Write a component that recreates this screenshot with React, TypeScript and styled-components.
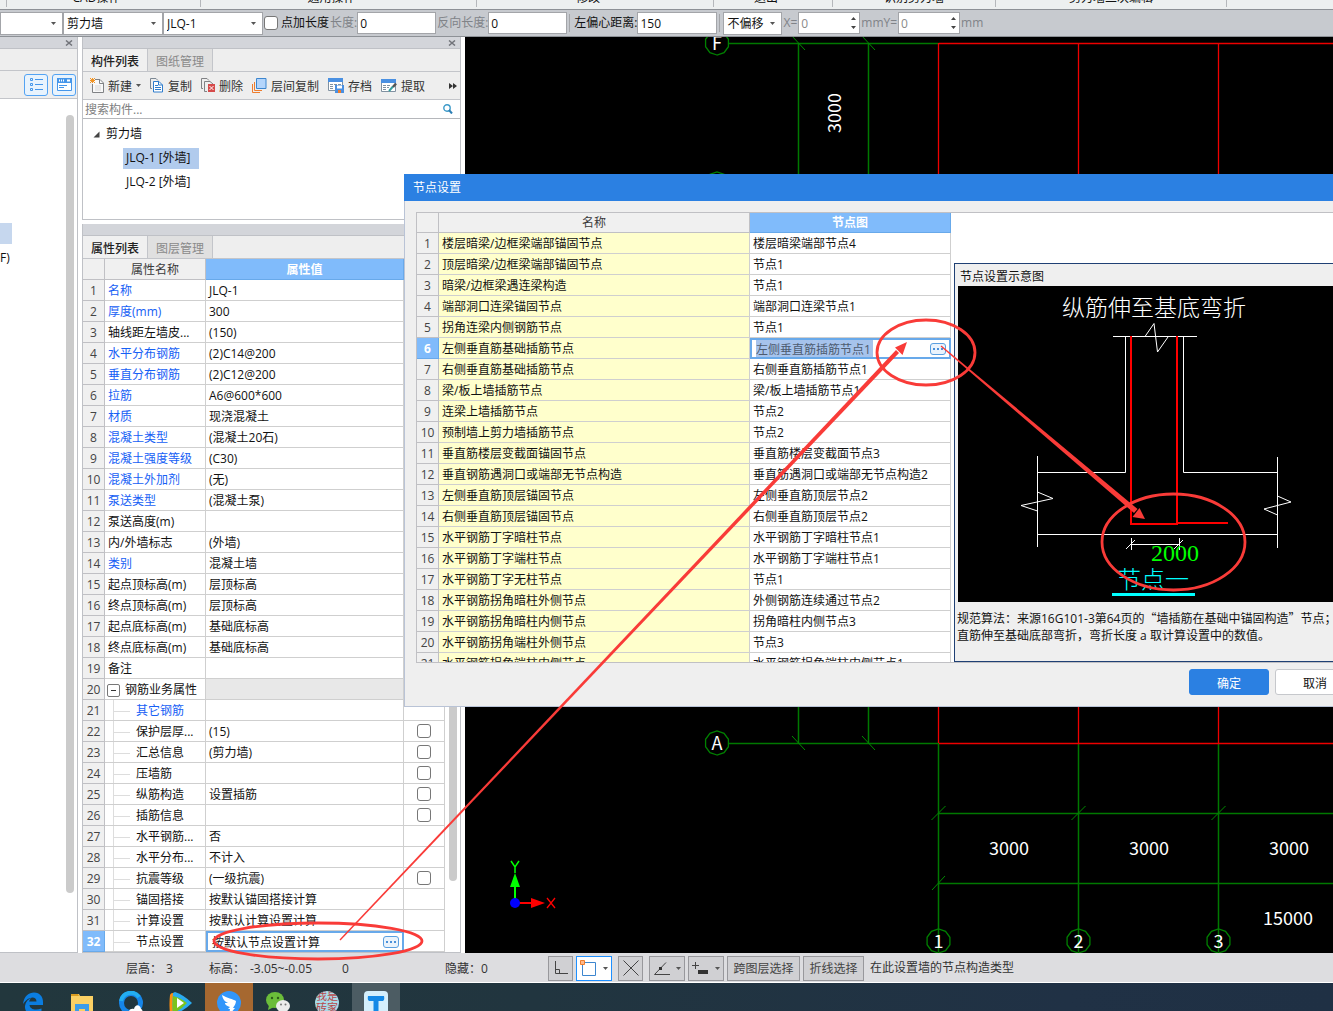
import React from "react";
import styled, { createGlobalStyle, css } from "styled-components";

const SANS = `"Open Sans", "Noto Sans CJK SC", sans-serif`;
const CJK = `"Noto Sans CJK SC", sans-serif`;

const GlobalStyle = createGlobalStyle`
  * { box-sizing: border-box; }
  body { margin: 0; overflow: hidden; }
  body, button, input, select, table { font-family: ${SANS}; font-size: 12px; color: #111; }
  button, input, select { margin: 0; padding: 0; border: 0; border-radius: 0; background: none; outline: 0; }
  ul { margin: 0; padding: 0; list-style: none; }
  svg { display: block; flex: none; }
`;

const App = styled.div`
  position: relative;
  display: flex;
  flex-direction: column;
  height: 100vh;
  overflow: hidden;
  background: #fff;
  line-height: 18px;
  white-space: nowrap;
`;

/* ---------- ribbon and option bar ---------- */

const Ribbon = styled.div`
  display: grid;
  grid-template-columns: 7px 194px 276px 237px 119px 163px 231px 1fr;
  flex: none;
  height: 9px;
  overflow: hidden;
  background: #edf0f0;
`;

const RibbonGroup = styled.div<{ $launcher?: boolean }>`
  display: flex;
  align-items: flex-end;
  justify-content: center;
  height: 7px;
  padding-right: ${(p) => (p.$launcher ? 14 : 0)}px;
  border-right: 1px solid #b5b8bb;
`;

const OptionBar = styled.div`
  display: flex;
  align-items: center;
  flex: none;
  height: 28px;
  border-top: 1px solid #8d9196;
  border-bottom: 1px solid #8d9196;
  background: #c7cacf;
`;

const SelectWrap = styled.span<{ $w: number }>`
  display: grid;
  grid-template-columns: 1fr 11px;
  align-items: center;
  width: ${(p) => p.$w}px;
  height: 23px;
  border: 1px solid #a3a5a9;
  background: #fff;
  select {
    grid-area: 1 / 1 / 2 / 3;
    width: 100%;
    height: 21px;
    padding-left: 3px;
    appearance: none;
  }
  svg { grid-area: 1 / 2; pointer-events: none; }
`;

const Field = styled.input<{ $w: number }>`
  width: ${(p) => p.$w}px;
  height: 22px;
  padding-left: 2px;
  border: 1px solid #a3a5a9;
  background: #fff;
`;

const BarLabel = styled.label<{ $dim?: boolean }>`
  display: flex;
  align-items: center;
  padding-left: 1px;
  color: ${(p) => (p.$dim ? "#808388" : "#111")};
`;

const AxisLabel = styled(BarLabel)`
  padding-right: 1px;
`;

const BarDivider = styled.span`
  width: 1px;
  height: 18px;
  margin: 0 3px 0 2px;
  background: #a3a5a9;
`;

const Spin = styled.span`
  display: flex;
  align-items: center;
  width: 62px;
  height: 22px;
  border: 1px solid #a3a5a9;
  background: #fff;
  input { width: 51px; padding-left: 2px; color: #8a8a8a; }
`;

const Check = styled.input`
  flex: none;
  width: 14px;
  height: 14px;
  border: 1px solid #777;
  border-radius: 3px;
  background: #fff;
  appearance: none;
  vertical-align: middle;
`;

const CheckLabel = styled(BarLabel)`
  gap: 3px;
`;

/* ---------- docked panels ---------- */

const Workspace = styled.div`
  display: flex;
  flex: 1;
  gap: 4px;
  min-height: 0;
`;

const NavDock = styled.aside`
  display: flex;
  flex-direction: column;
  width: 78px;
  border-right: 1px solid #bfc1c6;
  border-bottom: 1px solid #bfc1c6;
`;

const DockTitle = styled.div`
  display: flex;
  align-items: center;
  justify-content: flex-end;
  flex: none;
  height: 12px;
  padding-right: 4px;
  border-bottom: 1px solid #bfc1c6;
  background: #d3d5da;
`;

const NavHead = styled.div`
  flex: none;
  height: 22px;
  border-bottom: 1px solid #c3c5ca;
  background: #eee;
`;

const NavTools = styled.div`
  display: flex;
  align-items: center;
  justify-content: flex-end;
  gap: 4px;
  flex: none;
  height: 28px;
  padding-right: 1px;
  border-bottom: 1px solid #c3c5ca;
  background: #eee;
`;

const ViewButton = styled.button`
  display: flex;
  align-items: center;
  justify-content: center;
  width: 24px;
  height: 22px;
  border: 1px solid #53a3f3;
  border-radius: 3px;
  background: #e8f3fd;
`;

const NavBody = styled.div`
  display: flex;
  justify-content: space-between;
  flex: 1;
  min-height: 0;
  padding: 16px 3px 59px 0;
`;

const NavItems = styled.div`
  padding-top: 108px;
`;

const NavSelected = styled.div`
  width: 12px;
  height: 21px;
  margin-bottom: 5px;
  background: #c6d7ee;
`;

const Thumb = styled.div`
  width: 8px;
  border-radius: 4px;
  background: #cbcbcb;
`;

const Column = styled.div`
  display: flex;
  flex-direction: column;
  gap: 4px;
  width: 379px;
`;

const Dock = styled.section<{ $grow?: boolean }>`
  display: flex;
  flex-direction: column;
  min-height: 0;
  border: 1px solid #bfc1c6;
  border-top: 0;
  ${(p) =>
    p.$grow
      ? css`flex: 1;`
      : css`flex: none; height: 183px;`}
`;

const Tabs = styled.div`
  display: flex;
  flex: none;
  height: 23px;
  border-bottom: 1px solid #c3c5ca;
  background: #eee;
`;

const Tab = styled.button<{ $on?: boolean }>`
  width: 65px;
  padding-top: 1px;
  border-right: 1px solid #c3c5ca;
  background: ${(p) => (p.$on ? "#f0f0f0" : "#e0e0e0")};
  color: ${(p) => (p.$on ? "#222" : "#8a8a8a")};
  font-weight: ${(p) => (p.$on ? 500 : 400)};
`;

const Tools = styled.div`
  display: flex;
  align-items: center;
  gap: 9px;
  flex: none;
  height: 28px;
  padding: 0 3px 0 7px;
  border-bottom: 1px solid #c3c5ca;
  background: #eee;
`;

const Tool = styled.button`
  display: flex;
  align-items: center;
  gap: 4px;
  color: #333;
`;

const More = styled(Tool)`
  margin-left: auto;
`;

const Search = styled.div`
  display: flex;
  align-items: center;
  flex: none;
  height: 19px;
  padding: 0 7px 0 2px;
  border-bottom: 1px solid #b5b7bb;
  input { flex: 1; }
  input::placeholder { color: #808080; opacity: 1; }
`;

const Tree = styled.ul`
  flex: 1;
  padding-top: 3px;
`;

const TreeItem = styled.li<{ $level: number }>`
  display: flex;
  align-items: center;
  gap: 6px;
  height: 24px;
  padding-left: ${(p) => (p.$level ? 40 : 10)}px;
`;

const TreeLabel = styled.span<{ $on?: boolean }>`
  padding: 1px 8px 2px 3px;
  background: ${(p) => (p.$on ? "#b1cbed" : "transparent")};
`;

const TreeRoot = styled.span``;

/* ---------- tables ---------- */

const Grid = styled.table`
  flex: none;
  align-self: flex-start;
  border-spacing: 0;
  table-layout: fixed;
  th, td {
    height: 21px;
    padding: 2px 0 0 3px;
    border-right: 1px solid #cfcfcf;
    border-bottom: 1px solid #cfcfcf;
    overflow: hidden;
    font-weight: 400;
    line-height: 18px;
    text-align: left;
  }
  td { background: #fff; }
`;

const HeadCell = styled.th<{ $on?: boolean; $short?: boolean }>`
  && {
    height: ${(p) => (p.$short ? 20 : 21)}px;
    padding: ${(p) => (p.$short ? 1 : 2)}px 0 0;
    border-color: ${(p) => (p.$on ? "#68a9ea" : "#c0c0c4")};
    background: ${(p) => (p.$on ? "#80bbfb" : "#f0f0f0")};
    color: ${(p) => (p.$on ? "#fff" : "#3a3a3a")};
    font-weight: ${(p) => (p.$on ? 700 : 400)};
    text-align: center;
  }
`;

const NumCell = styled.th<{ $on?: boolean }>`
  && {
    padding: 2px 0 0;
    border-color: ${(p) => (p.$on ? "#68a9ea" : "#c0c0c4")};
    background: ${(p) => (p.$on ? "#80bbfb" : "#f0f0f0")};
    color: ${(p) => (p.$on ? "#fff" : "#444")};
    font-weight: ${(p) => (p.$on ? 700 : 400)};
    text-align: center;
  }
`;

const PropName = styled.td<{ $blue?: boolean }>`
  color: ${(p) => (p.$blue ? "#1660f5" : "#111")};
`;

const BranchCell = styled(PropName)`
  && { padding-top: 0; }
`;

const GroupValue = styled.td`
  && { background: #e8e8e8; }
`;

const NodeName = styled.td`
  && { background: #ffffcc; }
`;

const CheckCell = styled.td`
  && { padding: 0; text-align: center; line-height: 14px; }
`;

const EditCell = styled.td`
  && { padding: 0; border-color: #68a9ea; }
`;

const Editor = styled.div`
  display: flex;
  align-items: center;
  justify-content: space-between;
  height: 20px;
  padding: 0 3px 0 4px;
  border: 2px solid #68a9ea;
  border-width: 2px 1px 1px 2px;
  background: #fff;
`;

const EditInput = styled.input<{ $marked?: boolean }>`
  width: ${(p) => (p.$marked ? 117 : 160)}px;
  height: 17px;
  background: ${(p) => (p.$marked ? "#a6c3ec" : "transparent")};
  color: ${(p) => (p.$marked ? "#4d5b70" : "#111")};
`;

const DotsButton = styled.button`
  display: flex;
  align-items: center;
  justify-content: center;
  width: 16px;
  height: 12px;
  border: 1px solid #5a9fe0;
  border-radius: 3px;
  background: #eaf3fc;
`;

const Branch = styled.span`
  display: flex;
  align-items: center;
  height: 20px;
  padding-top: 2px;
  margin-left: 5px;
  border-left: 1px solid #ddd;
  color: inherit;
  &::before {
    content: "";
    width: 16px;
    height: 1px;
    margin-right: 6px;
    background: #ddd;
  }
`;

const GroupLabel = styled.span`
  display: flex;
  align-items: center;
  gap: 5px;
  margin-left: -1px;
`;

const Fold = styled.button`
  display: flex;
  align-items: center;
  justify-content: center;
  width: 13px;
  height: 13px;
  border: 1px solid #777;
  border-radius: 2px;
`;

const GridArea = styled.div`
  display: flex;
  flex: 1;
  min-height: 0;
  overflow: hidden;
`;

const ScrollLane = styled.div`
  display: flex;
  justify-content: center;
  flex: 1;
  padding: 60px 0 71px;
`;

/* ---------- drawing area ---------- */

const Canvas = styled.main`
  flex: 1;
  min-width: 0;
  overflow: hidden;
  background: #000;
`;

/* ---------- dialog ---------- */

const Dialog = styled.div`
  position: absolute;
  top: 174px;
  right: -34px;
  left: 404px;
  display: flex;
  flex-direction: column;
  border: 1px solid #b9c3d6;
  border-top: 0;
  background: #efefef;
`;

const DialogTitle = styled.div`
  height: 27px;
  margin-left: -1px;
  padding: 5px 9px;
  background: #2b80e2;
  color: #fff;
  line-height: 18px;
`;

const DialogBox = styled.div`
  display: flex;
  gap: 3px;
  height: 451px;
  margin: 11px 11px 0;
  overflow: hidden;
  border: 1px solid #c0c0c4;
  background: #fff;
`;

const Preview = styled.figure`
  display: flex;
  flex: 1;
  flex-direction: column;
  min-width: 0;
  margin: 50px 0 0;
  padding-left: 2px;
  border: 1px solid #1f4074;
  background: #efefef;
  overflow: hidden;
`;

const PreviewTitle = styled.figcaption`
  flex: none;
  height: 22px;
  padding: 4px 3px 0;
`;

const PreviewImage = styled.div`
  flex: none;
  height: 316px;
  margin-left: 1px;
  background: #000;
`;

const Note = styled.p`
  margin: 7px 0 0;
  line-height: 17px;
`;

const Quote = styled.span`
  font-family: ${CJK};
`;

const DialogFoot = styled.div`
  display: flex;
  justify-content: flex-end;
  gap: 6px;
  padding: 6px 11px 11px;
`;

const DialogButton = styled.button<{ $primary?: boolean }>`
  width: 80px;
  height: 26px;
  padding-top: 1px;
  border: 1px solid ${(p) => (p.$primary ? "#2b80e2" : "#c6c8cc")};
  border-radius: 3px;
  background: ${(p) => (p.$primary ? "#2b80e2" : "#fff")};
  color: ${(p) => (p.$primary ? "#fff" : "#111")};
`;

/* ---------- status bar and taskbar ---------- */

const StatusBar = styled.footer`
  display: flex;
  align-items: center;
  flex: none;
  height: 30px;
  padding-top: 1px;
  border-bottom: 1px solid #fff;
  background: #dddde0;
  color: #333;
`;

const StatusInfo = styled.div`
  display: grid;
  grid-template-columns: 40px 43px 41px 92px 103px 36px 1fr;
  flex: none;
  width: 548px;
  padding: 1px 0 0 126px;
`;

const StatusTools = styled.div`
  display: flex;
  align-items: center;
  gap: 3px;
`;

const StatusButton = styled.button<{ $w: number; $on?: boolean; $gap?: boolean }>`
  display: flex;
  align-items: center;
  justify-content: center;
  gap: 6px;
  width: ${(p) => p.$w}px;
  height: 25px;
  margin-right: ${(p) => (p.$gap ? 3 : 0)}px;
  border: 1px solid ${(p) => (p.$on ? "#1e90ff" : "#98989c")};
  background: ${(p) => (p.$on ? "#fff" : "#d0d0d3")};
  color: #444;
`;

const Taskbar = styled.nav`
  display: flex;
  gap: 1px;
  flex: none;
  height: 28px;
  padding-left: 9px;
  overflow: hidden;
  background: linear-gradient(90deg, #22373d 0%, #21353f 40%, #203145 80%, #1f3044 100%);
`;

const Task = styled.button<{ $bg?: string }>`
  display: flex;
  justify-content: center;
  width: 48px;
  height: 40px;
  padding-top: 8px;
  background: ${(p) => p.$bg || "transparent"};
`;

const Annotations = styled.svg`
  position: absolute;
  top: 0;
  left: 0;
  width: 100%;
  height: 100%;
  pointer-events: none;
`;

/* ---------- small pictures ---------- */

const Caret = () => (
  <svg width="5" height="3" viewBox="0 0 5 3"><path d="M0 0H5L2.500 3Z" fill="#555" /></svg>
);

const Close = () => (
  <svg width="8" height="6" viewBox="0 0 8 6"><path d="M1 .5L7 5.5M7 .5L1 5.5" stroke="#72747a" strokeWidth="1.5" /></svg>
);

const Dots = () => (
  <svg width="10" height="2" viewBox="0 0 10 2"><path d="M0 0h2v2H0zM4 0h2v2H4zM8 0h2v2H8z" fill="#4a90d9" /></svg>
);

const SpinArrows = () => (
  <svg width="7" height="14" viewBox="0 0 7 14"><path d="M1 4L3.5 1L6 4ZM1 10L3.5 13L6 10Z" fill="#444" /></svg>
);

const NewIcon = () => (
  <svg width="14" height="15" viewBox="0 0 14 15" fill="none">
    <path d="M5 1.5H10L13.500 5V14.500H2.500V6" fill="#f8f8f8" stroke="#808285" />
    <path d="M9.500 1.500V5.500H13" stroke="#808285" />
    <path d="M5 8h6M5 10h6M5 12h6" stroke="#d5d5d5" />
    <path d="M0 0L5 5M5 0L0 5M2.500 0V5M0 2.500H5" stroke="#f29423" />
  </svg>
);

const CopyIcon = () => (
  <svg width="14" height="15" viewBox="0 0 14 15" fill="none">
    <path d="M2 10.500H.5V.5H6L8 2.500" stroke="#7c8894" />
    <path d="M3.500 3.500H9L12.500 7V14H3.500Z" fill="#fff" stroke="#2f7ccc" />
    <path d="M8.500 3.500V7H12.500M5 7.500H8M5 9.500h6M5 11.500h6" stroke="#2f7ccc" />
  </svg>
);

const DeleteIcon = () => (
  <svg width="14" height="15" viewBox="0 0 14 15" fill="none">
    <path d="M2 10.500H.5V.5H6L8 2.500M6 13.500H3.500V3.500H9L12 6" stroke="#808285" />
    <path d="M7 6h7v8H7z" fill="#d64b4b" />
    <path d="M8.500 8L12.500 12M12.500 8L8.500 12" stroke="#fff" />
  </svg>
);

const LayersIcon = () => (
  <svg width="15" height="15" viewBox="0 0 15 15" fill="none">
    <path d="M.5 6V14.500H8M2.500 4V12.500H10" stroke="#ee7d2e" />
    <path d="M4.500 .5H14V10.500H4.500Z" fill="#b4d5fb" stroke="#3d86cf" />
  </svg>
);

const SaveIcon = () => (
  <svg width="16" height="15" viewBox="0 0 16 15" fill="none">
    <path d="M.5 .5H14.500V12.500H.5Z" fill="#fff" stroke="#8091a1" />
    <path d="M0 0H15V4H0Z" fill="#4a90e2" />
    <path d="M2 6.500h3M6 6.500h3M10 6.500h3M2 8.500h3M2 10.500h3" stroke="#8091a1" />
    <path d="M7 7H16V15H7Z" fill="#4a90e2" /><path d="M9 7.500h5v3H9z" fill="#fff" /><path d="M10 12h3v3h-3z" fill="#ee7d2e" />
  </svg>
);

const ExtractIcon = () => (
  <svg width="16" height="14" viewBox="0 0 16 14" fill="none">
    <path d="M.5 .5H14.500V12.500H.5Z" fill="#fff" stroke="#8091a1" />
    <path d="M0 0H15V4H0Z" fill="#4a90e2" />
    <path d="M2 6.500h3M6 6.500h3M2 8.500h3M6 8.500h2M2 10.500h3" stroke="#8091a1" />
    <path d="M8 12L12 7.500" stroke="#38a0a0" strokeWidth="2" /><path d="M12 8L15 4.500" stroke="#555" strokeWidth="2.500" />
  </svg>
);

const ListIcon = () => (
  <svg width="13" height="13" viewBox="0 0 13 13" fill="none" stroke="#4596ea">
    <path d="M.5 .5h2v2h-2zM.5 5.500h2v2h-2zM.5 10.500h2v2h-2zM5 1.500h8M5 6.500h8M5 11.500h8" />
  </svg>
);

const CardIcon = () => (
  <svg width="15" height="13" viewBox="0 0 15 13" fill="none">
    <path d="M.5 .5h14v12H.5z" fill="#fff" stroke="#4596ea" />
    <path d="M0 0h15v5H0z" fill="#4596ea" />
    <path d="M2 2.500h1M4 2.500h1M6 2.500h1M10 2.500h3" stroke="#fff" strokeWidth="2" />
    <path d="M2 7.500h8M2 9.500h5" stroke="#4596ea" />
  </svg>
);

const SearchIcon = () => (
  <svg width="10" height="10" viewBox="0 0 10 10" fill="none">
    <circle cx="4" cy="4" r="3.200" stroke="#3d9ac9" strokeWidth="1.400" /><path d="M6 6L9 9.500" stroke="#2d7fb5" strokeWidth="2" />
  </svg>
);

const taskIcons: { name: string; bg?: string; art: React.ReactNode }[] = [
  {
    name: "Edge",
    art: <path d="M2 13C3 5 8 1.500 13 1.500C19 1.500 22 6 22 11V14H8.500C9 18 14 20 20.500 17.500V22C14 25.500 3 24 4 15C4.500 11 7 8 11 6.500C8.500 8 8.200 10.500 8.200 10.500H15.500C15.500 4.500 7 5 2 13Z" fill="#0b7de0" />,
  },
  {
    name: "文件",
    art: <><path d="M1 3H9L10 5H23V24H1Z" fill="#fbd064" /><path d="M1 3H8L9 5H1Z" fill="#d99b20" /><path d="M5 24V13H19V24H15V18H9V24Z" fill="#3d9ce8" /></>,
  },
  {
    name: "浏览器",
    art: <><circle cx="12" cy="12" r="9.500" fill="none" stroke="#1685e8" strokeWidth="5" /><path d="M2 10A10 10 0 0 1 20 6" fill="none" stroke="#23aef0" strokeWidth="4" /><path d="M10 24V21C10 18 13 17 15 18C16 13 21 13 22 18C24 18 24 24 24 24Z" fill="#fff" /></>,
  },
  {
    name: "视频",
    art: <><path d="M2 4Q1 12 2 24L9 22V2Q3 1 2 4Z" fill="#ff8f0f" /><path d="M5 2Q4 12 5 24Q16 20 24 12Q16 4 7 1Z" fill="#2baaf0" /><path d="M5 5Q4 14 5 22Q13 19 19 12Q13 7 5 5Z" fill="#7ac31e" /><path d="M9 7V17L16 12Z" fill="#fff" /></>,
  },
  {
    name: "钉钉",
    bg: "#a66830",
    art: <><circle cx="12" cy="12" r="12" fill="#3296fa" /><path d="M5 4C10 7 16 8 19 10C19 13 17 15 16 17H18L12 24L13 18H11L13 16C9 15 8 13 8 12L11 12C7 10 6 8 5 4Z" fill="#fff" /></>,
  },
  {
    name: "微信",
    art: <><ellipse cx="9" cy="9" rx="9" ry="8" fill="#6bbd3a" /><path d="M3 14L2 19L8 16Z" fill="#6bbd3a" /><ellipse cx="17" cy="15" rx="7" ry="6" fill="#ececec" /><circle cx="6" cy="7" r="1.200" fill="#2e5c1a" /><circle cx="12" cy="7" r="1.200" fill="#2e5c1a" /><circle cx="15" cy="13.500" r="1" fill="#777" /><circle cx="19.500" cy="13.500" r="1" fill="#777" /></>,
  },
  {
    name: "我是砖家",
    art: <><clipPath id="seal"><circle cx="12" cy="12" r="12" /></clipPath><circle cx="12" cy="12" r="12" fill="#a9dbe8" /><g clipPath="url(#seal)" fill="#b8494c" fontFamily={CJK} fontSize="11"><text x="1" y="9">我是</text><text x="1" y="21">砖家</text></g></>,
  },
  {
    name: "T",
    bg: "#4c5c63",
    art: <><rect width="24" height="26" rx="4" fill="#d5effc" /><path d="M4 5H20Q21 10 18 10L14.500 10V24H9.500V10H6Q3 10 4 5Z" fill="#1489e6" /></>,
  },
];

/* ---------- data ---------- */

type Prop = { name: string; value?: string; blue?: boolean; child?: boolean; check?: boolean };

const props: Prop[] = [
  { name: "名称", value: "JLQ-1", blue: true },
  { name: "厚度(mm)", value: "300", blue: true },
  { name: "轴线距左墙皮...", value: "(150)" },
  { name: "水平分布钢筋", value: "(2)C14@200", blue: true },
  { name: "垂直分布钢筋", value: "(2)C12@200", blue: true },
  { name: "拉筋", value: "A6@600*600", blue: true },
  { name: "材质", value: "现浇混凝土", blue: true },
  { name: "混凝土类型", value: "(混凝土20石)", blue: true },
  { name: "混凝土强度等级", value: "(C30)", blue: true },
  { name: "混凝土外加剂", value: "(无)", blue: true },
  { name: "泵送类型", value: "(混凝土泵)", blue: true },
  { name: "泵送高度(m)" },
  { name: "内/外墙标志", value: "(外墙)" },
  { name: "类别", value: "混凝土墙", blue: true },
  { name: "起点顶标高(m)", value: "层顶标高" },
  { name: "终点顶标高(m)", value: "层顶标高" },
  { name: "起点底标高(m)", value: "基础底标高" },
  { name: "终点底标高(m)", value: "基础底标高" },
  { name: "备注" },
  { name: "钢筋业务属性" },
  { name: "其它钢筋", blue: true, child: true },
  { name: "保护层厚...", value: "(15)", child: true, check: true },
  { name: "汇总信息", value: "(剪力墙)", child: true, check: true },
  { name: "压墙筋", child: true, check: true },
  { name: "纵筋构造", value: "设置插筋", child: true, check: true },
  { name: "插筋信息", child: true, check: true },
  { name: "水平钢筋...", value: "否", child: true },
  { name: "水平分布...", value: "不计入", child: true },
  { name: "抗震等级", value: "(一级抗震)", child: true, check: true },
  { name: "锚固搭接", value: "按默认锚固搭接计算", child: true },
  { name: "计算设置", value: "按默认计算设置计算", child: true },
  { name: "节点设置", value: "按默认节点设置计算", child: true },
];

const nodes: [string, string][] = [
  ["楼层暗梁/边框梁端部锚固节点", "楼层暗梁端部节点4"],
  ["顶层暗梁/边框梁端部锚固节点", "节点1"],
  ["暗梁/边框梁遇连梁构造", "节点1"],
  ["端部洞口连梁锚固节点", "端部洞口连梁节点1"],
  ["拐角连梁内侧钢筋节点", "节点1"],
  ["左侧垂直筋基础插筋节点", "左侧垂直筋插筋节点1"],
  ["右侧垂直筋基础插筋节点", "右侧垂直筋插筋节点1"],
  ["梁/板上墙插筋节点", "梁/板上墙插筋节点1"],
  ["连梁上墙插筋节点", "节点2"],
  ["预制墙上剪力墙插筋节点", "节点2"],
  ["垂直筋楼层变截面锚固节点", "垂直筋楼层变截面节点3"],
  ["垂直钢筋遇洞口或端部无节点构造", "垂直筋遇洞口或端部无节点构造2"],
  ["左侧垂直筋顶层锚固节点", "左侧垂直筋顶层节点2"],
  ["右侧垂直筋顶层锚固节点", "右侧垂直筋顶层节点2"],
  ["水平钢筋丁字暗柱节点", "水平钢筋丁字暗柱节点1"],
  ["水平钢筋丁字端柱节点", "水平钢筋丁字端柱节点1"],
  ["水平钢筋丁字无柱节点", "节点1"],
  ["水平钢筋拐角暗柱外侧节点", "外侧钢筋连续通过节点2"],
  ["水平钢筋拐角暗柱内侧节点", "拐角暗柱内侧节点3"],
  ["水平钢筋拐角端柱外侧节点", "节点3"],
  ["水平钢筋拐角端柱内侧节点", "水平钢筋拐角端柱内侧节点1"],
];

/* ---------- drawings ---------- */

const axisX = [938.5, 1078.5, 1218.5];

function Bubble({ x, y, label }: { x: number; y: number; label: string }) {
  const points = Array.from({ length: 10 }, (_, i) => {
    const a = (i * Math.PI) / 5 + Math.PI / 2;
    return `${x + 12 * Math.cos(a)},${y + 12 * Math.sin(a)}`;
  }).join(" ");
  return (
    <>
      <polygon points={points} fill="none" stroke="#008000" strokeWidth="1.3" />
      <text x={x} y={y + 7} fill="#fff">{label}</text>
    </>
  );
}

function Plan() {
  return (
    <svg width="100%" height="100%" aria-label="轴网">
      <g transform="translate(-465 -37)" fill="none" fontFamily={CJK} fontSize="18" textAnchor="middle">
        <g stroke="#007800" strokeWidth="1.500">
          <path d="M798.500 43V743M868.500 43V743M729 43.500H939M729 743.500H939" />
          <path d="M939 813.500H2600M939 883.500H2600" />
          {axisX.map((x) => <path key={x} d={`M${x} 743V952`} />)}
        </g>
        <g stroke="#008c00">
          <path d="M792 36L805 50M862 36L875 50M792 736L805 750M862 736L875 750M932 890L945 876" />
          {axisX.map((x) => <path key={x} d={`M${x - 7} 820L${x + 7} 806`} />)}
        </g>
        <g stroke="#ee0000" strokeWidth="1.300">
          <path d="M939 43.500H2600M939 743.500H2600" />
          {axisX.map((x) => <path key={x} d={`M${x} 43V743`} />)}
        </g>
        <Bubble x={717} y={43} label="F" />
        <Bubble x={717} y={184} label="E" />
        <Bubble x={717} y={743} label="A" />
        {axisX.map((x, i) => <Bubble key={x} x={x} y={941} label={String(i + 1)} />)}
        <g fill="#fff">
          <text x="1009" y="855">3000</text>
          <text x="1149" y="855">3000</text>
          <text x="1289" y="855">3000</text>
          <text x="1288" y="925">15000</text>
          <text transform="translate(841 113) rotate(-90)">3000</text>
        </g>
        <path d="M515 903V885" stroke="#0f0" strokeWidth="2" /><path d="M510 887L515 873L520 887Z" fill="#0f0" />
        <path d="M515 903H532" stroke="#f00" strokeWidth="2" /><path d="M531 898L545 903L531 908Z" fill="#f00" />
        <circle cx="515" cy="903" r="5" fill="#00f" />
        <path d="M511 861L515 867L519 861M515 867V873" stroke="#0f0" strokeWidth="1.500" />
        <path d="M547 898L555 908M555 898L547 908" stroke="#f00" strokeWidth="1.300" />
      </g>
    </svg>
  );
}

function NodeDrawing() {
  return (
    <svg width="100%" height="316" aria-label="节点一">
      <g transform="translate(-958 -286)" fill="none" fontFamily={CJK} fontWeight="300">
        <text x="1062" y="316" fontSize="23" fill="#fff">纵筋伸至基底弯折</text>
        <g stroke="#fff">
          <path d="M1113 336.500H1197M1145 336.500L1154 323.500L1157.500 352L1168 337" />
          <path d="M1125.500 337V472.500H1037M1183.500 337V472.500H1277M1037 534.500H1277" />
          <path d="M1037.500 456V547M1277.500 457V548" />
          <path d="M1037.500 492L1053 498.500L1021 505.500L1037.500 511M1277.500 496L1291 502L1264 509L1277.500 515" />
          <path d="M1131 544.500H1180M1131.500 538V550M1179.500 538V550M1126 549L1135 540M1174 549L1183 540" />
        </g>
        <g stroke="#f00" strokeWidth="2">
          <path d="M1131 336V524H1178M1177 336V523H1228" />
        </g>
        <text x="1151" y="561" fontFamily="Liberation Serif, serif" fontSize="24" fontWeight="400" fill="#0f0">2000</text>
        <text x="1117" y="588" fontSize="24" fill="#0ff">节点一</text>
        <path d="M1112 594.500H1195" stroke="#0ff" strokeWidth="3" />
      </g>
    </svg>
  );
}

function Markup() {
  return (
    <Annotations aria-hidden="true">
      <g fill="none" stroke="#f93b38" strokeWidth="2.800">
        <ellipse cx="318" cy="941" rx="104" ry="18" />
        <ellipse cx="926" cy="352.500" rx="49" ry="32.500" />
        <ellipse cx="1173.500" cy="542" rx="71.500" ry="48" />
      </g>
      <g fill="#f93b38">
        <path d="M339.500 939.500L896 350L899 353L340.500 940.500Z" />
        <path d="M907 342L895 347.500L902.500 355Z" />
        <path d="M940.600 346.500L1134 513L1137.500 509L941.400 345.500Z" />
        <path d="M1145 519L1132.500 517L1139.500 508Z" />
      </g>
    </Annotations>
  );
}

/* ---------- sections ---------- */

function Options() {
  return (
    <OptionBar>
      <SelectWrap $w={63}><select aria-label="楼层"><option></option></select><Caret /></SelectWrap>
      <SelectWrap $w={100}><select aria-label="构件类型"><option>剪力墙</option></select><Caret /></SelectWrap>
      <SelectWrap $w={100}><select aria-label="构件"><option>JLQ-1</option></select><Caret /></SelectWrap>
      <CheckLabel><Check type="checkbox" />点加长度</CheckLabel>
      <BarLabel $dim htmlFor="len">长度:</BarLabel><Field id="len" $w={79} defaultValue="0" />
      <BarLabel $dim htmlFor="rev">反向长度:</BarLabel><Field id="rev" $w={79} defaultValue="0" />
      <BarDivider />
      <BarLabel htmlFor="ecc">左偏心距离:</BarLabel><Field id="ecc" $w={80} defaultValue="150" />
      <BarDivider />
      <SelectWrap $w={59}><select aria-label="偏移方式"><option>不偏移</option></select><Caret /></SelectWrap>
      <AxisLabel $dim htmlFor="dx">X=</AxisLabel><Spin><input id="dx" defaultValue="0" /><SpinArrows /></Spin>
      <AxisLabel $dim htmlFor="dy">mmY=</AxisLabel><Spin><input id="dy" defaultValue="0" /><SpinArrows /></Spin>
      <BarLabel $dim as="span">mm</BarLabel>
    </OptionBar>
  );
}

function Navigator() {
  return (
    <NavDock>
      <DockTitle><Close /></DockTitle>
      <NavHead />
      <NavTools>
        <ViewButton aria-label="列表"><ListIcon /></ViewButton>
        <ViewButton aria-label="卡片"><CardIcon /></ViewButton>
      </NavTools>
      <NavBody>
        <NavItems><NavSelected />F)</NavItems>
        <Thumb />
      </NavBody>
    </NavDock>
  );
}

function ComponentDock() {
  return (
    <Dock>
      <DockTitle><Close /></DockTitle>
      <Tabs><Tab $on>构件列表</Tab><Tab>图纸管理</Tab></Tabs>
      <Tools>
        <Tool><NewIcon />新建<Caret /></Tool>
        <Tool><CopyIcon />复制</Tool>
        <Tool><DeleteIcon />删除</Tool>
        <Tool><LayersIcon />层间复制</Tool>
        <Tool><SaveIcon />存档</Tool>
        <Tool><ExtractIcon />提取</Tool>
        <More aria-label="更多">
          <svg width="8" height="6" viewBox="0 0 8 6"><path d="M0 0L4 3L0 6ZM4 0L8 3L4 6Z" fill="#333" /></svg>
        </More>
      </Tools>
      <Search><input aria-label="搜索构件" placeholder="搜索构件..." /><SearchIcon /></Search>
      <Tree>
        <TreeItem $level={0}>
          <svg width="7" height="7" viewBox="0 0 7 7"><path d="M6.500 .5V6.500H.5Z" fill="#444" /></svg>
          <TreeRoot>剪力墙</TreeRoot>
        </TreeItem>
        <TreeItem $level={1}><TreeLabel $on>JLQ-1 [外墙]</TreeLabel></TreeItem>
        <TreeItem $level={1}><TreeLabel>JLQ-2 [外墙]</TreeLabel></TreeItem>
      </Tree>
    </Dock>
  );
}

function PropertyDock() {
  return (
    <Dock $grow>
      <DockTitle />
      <Tabs><Tab $on>属性列表</Tab><Tab>图层管理</Tab></Tabs>
      <GridArea>
        <Grid style={{ width: 362 }}>
          <colgroup><col width="22" /><col width="101" /><col width="198" /><col width="41" /></colgroup>
          <thead>
            <tr><HeadCell /><HeadCell>属性名称</HeadCell><HeadCell $on>属性值</HeadCell><HeadCell /></tr>
          </thead>
          <tbody>
            {props.map((p, i) => {
              const last = i === props.length - 1;
              const group = i === 19;
              return (
                <tr key={i}>
                  <NumCell $on={last}>{i + 1}</NumCell>
                  {p.child ? (
                    <BranchCell $blue={p.blue}><Branch>{p.name}</Branch></BranchCell>
                  ) : (
                    <PropName $blue={p.blue}>
                      {group ? (
                        <GroupLabel>
                          <Fold aria-label="折叠"><svg width="5" height="1"><path d="M0 .5H5" stroke="#333" /></svg></Fold>
                          {p.name}
                        </GroupLabel>
                      ) : p.name}
                    </PropName>
                  )}
                  {last ? (
                    <EditCell>
                      <Editor>
                        <EditInput aria-label={p.name} defaultValue={p.value} />
                        <DotsButton aria-label="设置"><Dots /></DotsButton>
                      </Editor>
                    </EditCell>
                  ) : group ? <GroupValue /> : <td>{p.value}</td>}
                  <CheckCell>{p.check && <Check type="checkbox" aria-label={p.name} />}</CheckCell>
                </tr>
              );
            })}
          </tbody>
        </Grid>
        <ScrollLane><Thumb /></ScrollLane>
      </GridArea>
    </Dock>
  );
}

function NodeDialog() {
  return (
    <Dialog role="dialog" aria-label="节点设置">
      <DialogTitle>节点设置</DialogTitle>
      <DialogBox>
        <Grid style={{ width: 534 }}>
          <colgroup><col width="22" /><col width="311" /><col width="201" /></colgroup>
          <thead>
            <tr><HeadCell $short /><HeadCell $short>名称</HeadCell><HeadCell $short $on>节点图</HeadCell></tr>
          </thead>
          <tbody>
            {nodes.map(([name, value], i) => (
              <tr key={name}>
                <NumCell $on={i === 5}>{i + 1}</NumCell>
                <NodeName>{name}</NodeName>
                {i === 5 ? (
                  <EditCell>
                    <Editor>
                      <EditInput $marked aria-label={name} defaultValue={value} />
                      <DotsButton aria-label="选择节点"><Dots /></DotsButton>
                    </Editor>
                  </EditCell>
                ) : <td>{value}</td>}
              </tr>
            ))}
          </tbody>
        </Grid>
        <Preview>
          <PreviewTitle>节点设置示意图</PreviewTitle>
          <PreviewImage><NodeDrawing /></PreviewImage>
          <Note>
            规范算法：来源16G101-3第64页的<Quote>“</Quote>墙插筋在基础中锚固构造<Quote>”</Quote>节点；
            <br />
            直筋伸至基础底部弯折，弯折长度 a 取计算设置中的数值。
          </Note>
        </Preview>
      </DialogBox>
      <DialogFoot>
        <DialogButton $primary>确定</DialogButton>
        <DialogButton>取消</DialogButton>
      </DialogFoot>
    </Dialog>
  );
}

function Status() {
  return (
    <StatusBar>
      <StatusInfo>
        <span>层高：</span><span>3</span><span>标高：</span><span>-3.05~-0.05</span><span>0</span><span>隐藏：</span><span>0</span>
      </StatusInfo>
      <StatusTools>
        <StatusButton $w={25} aria-label="正交">
          <svg width="14" height="14" fill="none" stroke="#444"><path d="M1.500 0V12.500H14M1.500 8.500H5.500V12.500" /></svg>
        </StatusButton>
        <StatusButton $w={36} $on $gap aria-label="对象捕捉">
          <svg width="17" height="16" fill="none"><path d="M2.500 2.500H15.500V15.500H2.500Z" stroke="#3d86cf" /><path d="M.5 .5H4.500V4.500H.5Z" fill="#ffb98a" stroke="#ee7d2e" /></svg>
          <Caret />
        </StatusButton>
        <StatusButton $w={25} $gap aria-label="交点">
          <svg width="16" height="16" fill="none"><path d="M.5 .5L15.500 15.500M15.500 .5L.5 15.500" stroke="#444" /><path d="M7 7h2v2H7z" fill="#444" /></svg>
        </StatusButton>
        <StatusButton $w={36} aria-label="角度">
          <svg width="16" height="13" fill="none"><path d="M12 .5L.5 12.500H16" stroke="#444" /><path d="M5 5h3v3H5z" fill="#333" /></svg>
          <Caret />
        </StatusButton>
        <StatusButton $w={36} aria-label="动态输入">
          <svg width="17" height="13" fill="none"><path d="M0 3.500H7M3.500 0V7" stroke="#444" /><path d="M6 8h10v4H6z" fill="#333" /></svg>
          <Caret />
        </StatusButton>
        <StatusButton $w={73}>跨图层选择</StatusButton>
        <StatusButton $w={61} $gap>折线选择</StatusButton>
        <span>在此设置墙的节点构造类型</span>
      </StatusTools>
    </StatusBar>
  );
}

export default function Root() {
  return (
    <App>
      <GlobalStyle />
      <Ribbon>
        <RibbonGroup />
        <RibbonGroup $launcher>CAD操作</RibbonGroup>
        <RibbonGroup $launcher>通用操作</RibbonGroup>
        <RibbonGroup $launcher>修改</RibbonGroup>
        <RibbonGroup $launcher>退出</RibbonGroup>
        <RibbonGroup>识别剪力墙</RibbonGroup>
        <RibbonGroup>剪力墙二次编辑</RibbonGroup>
      </Ribbon>
      <Options />
      <Workspace>
        <Navigator />
        <Column>
          <ComponentDock />
          <PropertyDock />
        </Column>
        <Canvas><Plan /></Canvas>
      </Workspace>
      <Status />
      <Taskbar>
        {taskIcons.map((t) => (
          <Task key={t.name} $bg={t.bg} aria-label={t.name}>
            <svg width="24" height="26" viewBox="0 0 24 26">{t.art}</svg>
          </Task>
        ))}
      </Taskbar>
      <NodeDialog />
      <Markup />
    </App>
  );
}
